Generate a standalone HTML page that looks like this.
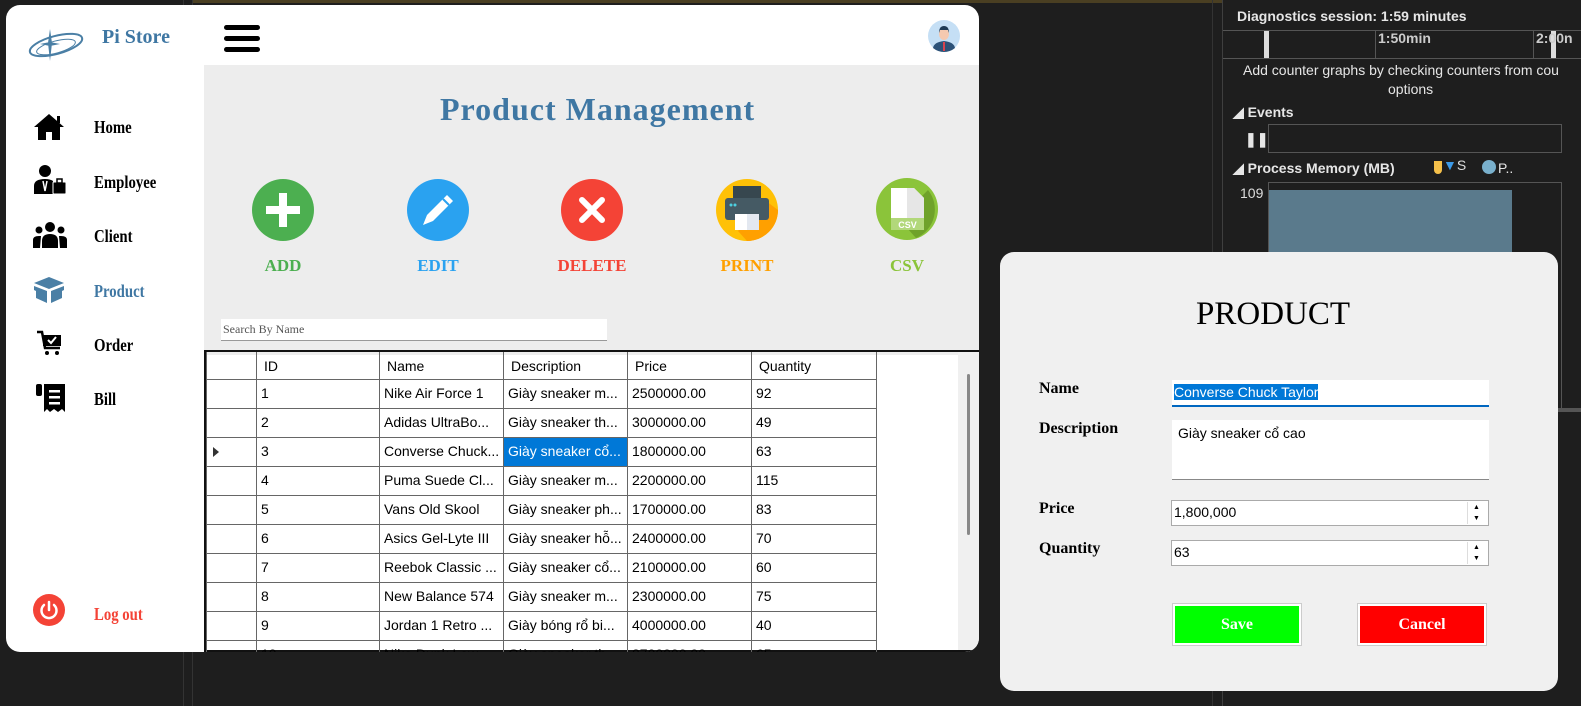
<!DOCTYPE html>
<html><head><meta charset="utf-8"><style>
*{margin:0;padding:0;box-sizing:border-box}
body{width:1581px;height:706px;background:#1e1e1e;position:relative;overflow:hidden;font-family:"Liberation Sans",sans-serif}
.a{position:absolute}
.ser{font-family:"Liberation Serif",serif;font-weight:bold}
.nav{position:absolute;left:88px;font-family:"Liberation Serif",serif;font-weight:bold;font-size:18px;transform:scaleX(.82);transform-origin:left;color:#000}
.cell{position:absolute;font-size:14px;color:#000;white-space:nowrap;overflow:hidden}
.lbl{position:absolute;font-family:"Liberation Serif",serif;font-weight:bold;font-size:17px;text-align:center;width:120px}
.dk{color:#e6e6e6;font-size:14px;position:absolute;white-space:nowrap}
</style></head><body>
<div class="a" style="left:193px;top:0;width:1030px;height:3px;background:#4a3f22"></div>
<div class="a" style="left:183px;top:0;width:1px;height:706px;background:#333"></div>
<div class="a" style="left:192px;top:0;width:1px;height:706px;background:#333"></div>
<div class="a" style="left:1212px;top:0;width:1px;height:706px;background:#333"></div>
<div class="a" style="left:1222px;top:0;width:1px;height:706px;background:#3f3f3f"></div>
<div class="dk" style="left:1237px;top:8px;font-weight:bold">Diagnostics session: 1:59 minutes</div>
<div class="a" style="left:1223px;top:30px;width:358px;height:1px;background:#555"></div>
<div class="a" style="left:1223px;top:58px;width:358px;height:1px;background:#555"></div>
<div class="a" style="left:1264px;top:31px;width:5px;height:27px;background:#ddd"></div>
<div class="a" style="left:1551px;top:31px;width:5px;height:27px;background:#ddd"></div>
<div class="a" style="left:1375px;top:31px;width:1px;height:27px;background:#555"></div>
<div class="a" style="left:1533px;top:31px;width:1px;height:27px;background:#555"></div>
<div class="dk" style="left:1378px;top:30px;font-weight:bold;color:#ccc">1:50min</div>
<div class="dk" style="left:1536px;top:30px;font-weight:bold;color:#ccc">2:00n</div>
<div class="dk" style="left:1243px;top:62px">Add counter graphs by checking counters from cou</div>
<div class="dk" style="left:1388px;top:81px">options</div>
<div class="dk" style="left:1233px;top:104px;font-weight:bold">◢ Events</div>
<div class="a" style="left:1268px;top:124px;width:294px;height:29px;border:1px solid #555"></div>
<div class="dk" style="left:1245px;top:131px;font-weight:bold">❚❚</div>
<div class="dk" style="left:1233px;top:160px;font-weight:bold">◢ Process Memory (MB)</div>
<div class="a" style="left:1434px;top:161px;width:8px;height:13px;background:#f5c04a;border-radius:0 0 4px 4px"></div>
<div class="dk" style="left:1443px;top:157px;color:#3c9ae8">▼<span style="color:#ddd">S</span></div>
<div class="a" style="left:1482px;top:160px;width:14px;height:14px;border-radius:50%;background:#79b0cc"></div>
<div class="dk" style="left:1498px;top:160px">P..</div>
<div class="dk" style="left:1240px;top:185px;color:#ddd">109</div>
<div class="a" style="left:1268px;top:182px;width:294px;height:230px;border:1px solid #555"></div>
<div class="a" style="left:1269px;top:190px;width:243px;height:220px;background:#5a7a8c"></div>
<div class="a" style="left:1530px;top:408px;width:51px;height:4px;background:#555"></div>

<div class="a" style="left:6px;top:5px;width:973px;height:647px;background:#fff;border-radius:14px;overflow:hidden">
 <div class="a" style="left:198px;top:60px;width:775px;height:290px;background:#ededed"></div>
 <svg class="a" style="left:20px;top:20px" width="60" height="40" viewBox="0 0 60 40"><ellipse cx="30" cy="20" rx="27" ry="9" transform="rotate(-15 30 20)" fill="none" stroke="#4a7fa5" stroke-width="2"/><ellipse cx="30" cy="22" rx="20" ry="6" transform="rotate(-15 30 22)" fill="none" stroke="#4a7fa5" stroke-width="1"/><path d="M24 4 L26 18 L24 36 L22 18Z M14 19 L24 17 L34 19 L24 21Z" fill="#4a7fa5"/></svg>
 <div class="a ser" style="left:96px;top:21px;font-size:20px;color:#3f77a3">Pi Store</div>
 <div class="a" style="left:218px;top:20px;width:36px;height:5px;background:#000;border-radius:3px"></div>
 <div class="a" style="left:218px;top:31px;width:36px;height:5px;background:#000;border-radius:3px"></div>
 <div class="a" style="left:218px;top:42px;width:36px;height:5px;background:#000;border-radius:3px"></div>
 <svg class="a" style="left:922px;top:15px" width="32" height="32" viewBox="0 0 32 32"><circle cx="16" cy="16" r="16" fill="#c5dff5"/><path d="M5 28 Q6 22 16 21 Q26 22 27 28 Q22 32 16 32 Q10 32 5 28Z" fill="#2d5278"/><rect x="15" y="22" width="2" height="9" fill="#d9434f"/><ellipse cx="16" cy="14" rx="5" ry="6" fill="#f5c9b0"/><path d="M11 13 Q11 6 16 6 Q21 6 21 13 L20 10 L12 10Z" fill="#1e3a55"/></svg>
 <svg class="a" style="left:27px;top:108px" width="32" height="28" viewBox="0 0 32 28"><path d="M16 1 L31 14 L27 14 L27 27 L19 27 L19 19 L13 19 L13 27 L5 27 L5 14 L1 14Z" fill="#000"/><rect x="24" y="3" width="3" height="7" fill="#000"/></svg>
 <div class="nav" style="top:112px">Home</div>
 <svg class="a" style="left:27px;top:160px" width="34" height="30" viewBox="0 0 34 30"><circle cx="12" cy="6" r="6" fill="#000"/><path d="M1 29 L1 21 Q1 14 12 14 Q17 14 20 16 L20 29Z" fill="#000"/><path d="M10 16 L12 26 L14 16" stroke="#fff" stroke-width="1.5" fill="none"/><rect x="20" y="17" width="13" height="12" rx="1" fill="#000" stroke="#fff" stroke-width="1"/><rect x="24" y="14" width="5" height="4" fill="none" stroke="#000" stroke-width="1.5"/></svg>
 <div class="nav" style="top:167px">Employee</div>
 <svg class="a" style="left:27px;top:216px" width="34" height="28" viewBox="0 0 34 28"><circle cx="17" cy="6" r="5" fill="#000"/><circle cx="6" cy="9" r="3.5" fill="#000"/><circle cx="28" cy="9" r="3.5" fill="#000"/><path d="M9 27 L9 20 Q9 13 17 13 Q25 13 25 20 L25 27Z" fill="#000"/><path d="M0 27 L0 19 Q0 15 6 15 L8 15 L7 27Z M34 27 L34 19 Q34 15 28 15 L26 15 L27 27Z" fill="#000"/></svg>
 <div class="nav" style="top:221px">Client</div>
 <svg class="a" style="left:27px;top:271px" width="32" height="28" viewBox="0 0 32 28"><path d="M16 1 L31 7 L16 13 L1 7Z" fill="#4a7fa5"/><path d="M1 10 L14 15 L14 27 L3 22 L3 15 L1 14Z M31 10 L18 15 L18 27 L29 22 L29 15 L31 14Z" fill="#4a7fa5"/></svg>
 <div class="nav" style="top:276px;color:#3f77a3">Product</div>
 <svg class="a" style="left:30px;top:325px" width="28" height="26" viewBox="0 0 28 26"><path d="M1 2 L6 2 L9 18 L24 18" stroke="#000" stroke-width="2.5" fill="none"/><rect x="7" y="5" width="18" height="11" fill="#000"/><path d="M12 10 L15 13 L20 7" stroke="#fff" stroke-width="2" fill="none"/><circle cx="11" cy="23" r="2" fill="#000"/><circle cx="21" cy="23" r="2" fill="#000"/></svg>
 <div class="nav" style="top:330px">Order</div>
 <svg class="a" style="left:29px;top:378px" width="32" height="30" viewBox="0 0 32 30"><rect x="1" y="1" width="6" height="12" rx="2" fill="#000"/><path d="M9 1 L30 1 L30 29 L27 26 L23 29 L19 26 L15 29 L12 26 L9 29Z" fill="#000"/><rect x="14" y="7" width="11" height="2.5" fill="#fff"/><rect x="14" y="13" width="11" height="2.5" fill="#fff"/><rect x="14" y="19" width="11" height="2.5" fill="#fff"/></svg>
 <div class="nav" style="top:384px">Bill</div>
 <svg class="a" style="left:27px;top:589px" width="32" height="32" viewBox="0 0 32 32"><circle cx="16" cy="16" r="16" fill="#f44336"/><path d="M11 11 A7.5 7.5 0 1 0 21 11" stroke="#fff" stroke-width="2.5" fill="none" stroke-linecap="round"/><line x1="16" y1="8" x2="16" y2="16" stroke="#fff" stroke-width="2.5" stroke-linecap="round"/></svg>
 <div class="nav" style="top:599px;color:#f44336">Log  out</div>

 <div class="a ser" style="left:434px;top:86px;font-size:32px;letter-spacing:1px;color:#3f77a3">Product Management</div>
 <svg class="a" style="left:246px;top:174px" width="62" height="62"><circle cx="31" cy="31" r="31" fill="#4caf50"/><rect x="14" y="27" width="34" height="8" fill="#fff"/><rect x="27" y="14" width="8" height="34" fill="#fff"/></svg>
 <svg class="a" style="left:401px;top:174px" width="62" height="62"><circle cx="31" cy="31" r="31" fill="#2aa2f0"/><path d="M40 16 L46 22 L26 42 L16 46 L20 36Z" fill="#fff"/><line x1="36" y1="20" x2="42" y2="26" stroke="#2aa2f0" stroke-width="2"/></svg>
 <svg class="a" style="left:555px;top:174px" width="62" height="62"><circle cx="31" cy="31" r="31" fill="#f44336"/><path d="M21 21 L41 41 M41 21 L21 41" stroke="#fff" stroke-width="6" stroke-linecap="round"/></svg>
 <svg class="a" style="left:710px;top:174px" width="62" height="62"><circle cx="31" cy="31" r="31" fill="#ffc107"/><path d="M31 62 A31 31 0 0 0 62 31 L50 22 L22 52Z" fill="#ffa000"/><rect x="17" y="7" width="28" height="14" fill="#37474f"/><rect x="9" y="19" width="44" height="22" rx="3" fill="#455a64"/><circle cx="15" cy="26" r="1.5" fill="#4dd0e1"/><circle cx="19" cy="26" r="1.5" fill="#4dd0e1"/><rect x="19" y="35" width="24" height="16" fill="#fff"/><rect x="31" y="35" width="12" height="16" fill="#e3e8f0"/></svg>
 <svg class="a" style="left:870px;top:173px" width="62" height="62"><circle cx="31" cy="31" r="31" fill="#8bc43a"/><path d="M52 12 A31 31 0 0 1 40 60 L22 40 L46 18Z" fill="#6fa22a"/><path d="M15 10 L38 10 L48 20 L48 52 L15 52Z" fill="#fff"/><path d="M31 10 L38 10 L48 20 L48 52 L31 52Z" fill="#e6e6e6"/><rect x="15" y="40" width="33" height="12" fill="#b2d87a"/><text x="31.5" y="50" font-family="Liberation Sans" font-weight="bold" font-size="9" fill="#fff" text-anchor="middle">CSV</text></svg>
 <div class="lbl" style="left:217px;top:251px;color:#4caf50">ADD</div>
 <div class="lbl" style="left:372px;top:251px;color:#2aa2f0">EDIT</div>
 <div class="lbl" style="left:526px;top:251px;color:#f44336">DELETE</div>
 <div class="lbl" style="left:681px;top:251px;color:#ffa000">PRINT</div>
 <div class="lbl" style="left:841px;top:251px;color:#8bc43a">CSV</div>
 <div class="a" style="left:215px;top:314px;width:386px;height:22px;background:#fff;border-bottom:1px solid #999;font-family:'Liberation Serif',serif;font-size:12px;color:#555;padding:3px 2px">Search By Name</div>
 <div class="a" style="left:198px;top:345px;width:775px;height:2px;background:#111"></div>
 <div class="a" style="left:198px;top:347px;width:2px;height:300px;background:#111"></div>
 <div class="a" style="left:952px;top:347px;width:21px;height:300px;background:#f0f0f0"></div>
 <div class="a" style="left:961px;top:369px;width:3px;height:161px;background:#888;border-radius:2px"></div>
 <div class="a" style="left:198px;top:645px;width:775px;height:2px;background:#111"></div>
 <div id="grid"></div>
</div>

<div class="a" style="left:1000px;top:252px;width:558px;height:439px;background:#f0f0f0;border-radius:14px">
 <div class="a" style="left:196px;top:44px;font-family:'Liberation Serif',serif;font-size:33px;color:#000">PRODUCT</div>
 <div class="a ser" style="left:39px;top:128px;font-size:16px">Name</div>
 <div class="a ser" style="left:39px;top:168px;font-size:16px">Description</div>
 <div class="a ser" style="left:39px;top:248px;font-size:16px">Price</div>
 <div class="a ser" style="left:39px;top:288px;font-size:16px">Quantity</div>
 <div class="a" style="left:172px;top:128px;width:317px;height:27px;background:#fff;border-bottom:2px solid #0067c0;padding:4px 2px;font-size:14px"><span style="background:#0078d7;color:#fff">Converse Chuck Taylor</span></div>
 <div class="a" style="left:172px;top:168px;width:317px;height:60px;background:#fff;border-bottom:1px solid #888;padding:5px 6px;font-size:14px">Giày sneaker cổ cao</div>
 <div class="a" style="left:171px;top:248px;width:318px;height:26px;background:#fff;border:1px solid #aaa;padding:3px 2px;font-size:14px">1,800,000</div>
 <div class="a" style="left:171px;top:288px;width:318px;height:26px;background:#fff;border:1px solid #aaa;padding:3px 2px;font-size:14px">63</div>
 <div class="a" style="left:467px;top:250px;width:18px;height:22px;font-size:7px;line-height:11px;text-align:center;border-left:1px solid #ddd">▲<br>▼</div>
 <div class="a" style="left:467px;top:290px;width:18px;height:22px;font-size:7px;line-height:11px;text-align:center;border-left:1px solid #ddd">▲<br>▼</div>
 <div class="a ser" style="left:173px;top:352px;width:128px;height:41px;background:#00ff00;border:2px solid #fff;outline:1px solid #ccc;color:#fff;font-size:16px;text-align:center;line-height:37px">Save</div>
 <div class="a ser" style="left:358px;top:352px;width:128px;height:41px;background:#ff0000;border:2px solid #fff;outline:1px solid #ccc;color:#fff;font-size:16px;text-align:center;line-height:37px">Cancel</div>
</div>

<script>
var rows=[["1","Nike Air Force 1","Giày sneaker m...","2500000.00","92"],["2","Adidas UltraBo...","Giày sneaker th...","3000000.00","49"],["3","Converse Chuck...","Giày sneaker cổ...","1800000.00","63"],["4","Puma Suede Cl...","Giày sneaker m...","2200000.00","115"],["5","Vans Old Skool","Giày sneaker ph...","1700000.00","83"],["6","Asics Gel-Lyte III","Giày sneaker hỗ...","2400000.00","70"],["7","Reebok Classic ...","Giày sneaker cổ...","2100000.00","60"],["8","New Balance 574","Giày sneaker m...","2300000.00","75"],["9","Jordan 1 Retro ...","Giày bóng rổ bi...","4000000.00","40"],["10","Nike Dunk Low","Giày sneaker th...","2700000.00","65"]];
var cols=[200,250,373,497,621,745,870];var h='';
for(var i=0;i<cols.length;i++)h+='<div class="a" style="left:'+cols[i]+'px;top:347px;width:1px;height:300px;background:#666"></div>';
h+='<div class="a" style="left:200px;top:374px;width:671px;height:1px;background:#666"></div>';
var hd=["ID","Name","Description","Price","Quantity"];
for(var c=0;c<5;c++)h+='<div class="cell" style="left:'+(cols[c+1]+8)+'px;top:353px">'+hd[c]+'</div>';
for(var r=0;r<rows.length;r++){var y=375+r*29;
 h+='<div class="a" style="left:200px;top:'+(y+28)+'px;width:671px;height:1px;background:#666"></div>';
 for(var c=0;c<5;c++){var sel=(r==2&&c==2);
  h+='<div class="cell" style="left:'+(cols[c+1]+1)+'px;top:'+y+'px;width:'+(cols[c+2]-cols[c+1]-1)+'px;height:28px;padding:5px 4px;'+(sel?'background:#0078d7;color:#fff;':'')+'">'+rows[r][c]+'</div>';}
 if(r==2)h+='<div class="a" style="left:207px;top:'+(y+9)+'px;width:0;height:0;border-left:6px solid #333;border-top:5px solid transparent;border-bottom:5px solid transparent"></div>';}
document.getElementById('grid').innerHTML=h;
</script>
</body></html>
